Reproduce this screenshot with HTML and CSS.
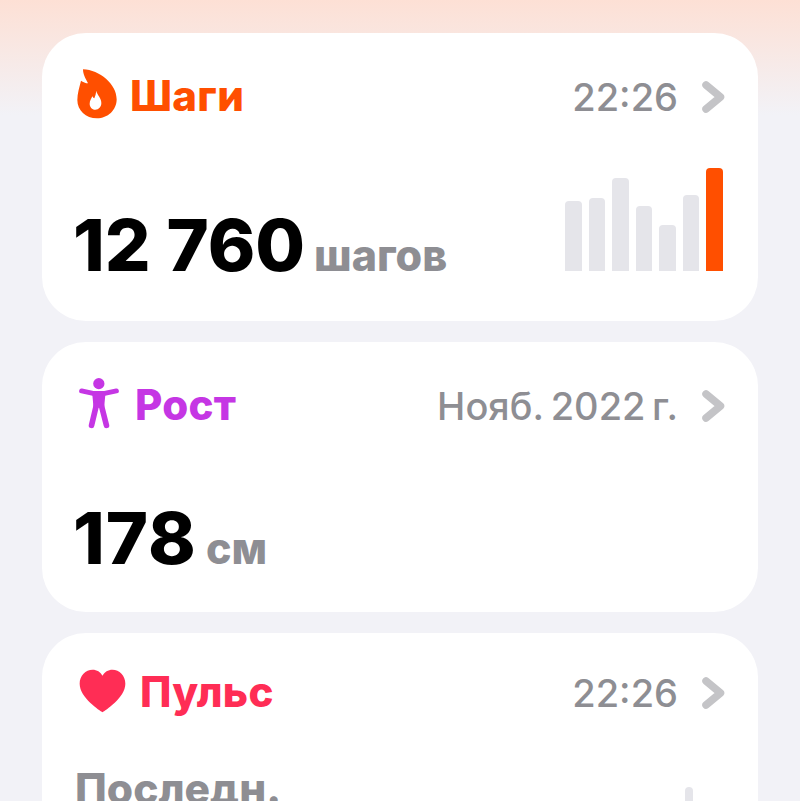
FILE: index.html
```html
<!DOCTYPE html>
<html lang="ru">
<head>
    <meta charset="UTF-8">
    <title>Здоровье</title>
    <link rel="stylesheet" href="styles.css">
</head>
<body>
    <div class="card card-steps">
        <div class="card-head">
            <svg class="icon icon-flame" viewBox="110 117 120 150">
                <path fill="#ff4f00" fill-rule="evenodd" d="M128 118C178 120 229 162 229 208C229 241 202 265 170 265C136 265 111 241 111 210C111 190 117 172 122 152C128 156 136 160 143 160C136 146 128 134 128 118ZM168 182C170 196 183 202 183 219C183 231 175 239 165 239C155 239 148 231 148 221C148 212 153 206 156 199C158 203 160 205 162 205C165 198 167 190 168 182Z"/>
            </svg>
            <span class="card-title title-steps">Шаги</span>
            <span class="card-time">22:26</span>
            <svg class="chevron" viewBox="0 0 24 34"><path d="M5 5L19.5 17L5 29"/></svg>
        </div>
        <div class="card-body">
            <div class="reading"><span class="value">12 760</span><span class="unit">шагов</span></div>
            <div class="bars">
                <div class="bar" style="height: 70px"></div>
                <div class="bar" style="height: 73px"></div>
                <div class="bar" style="height: 93px"></div>
                <div class="bar" style="height: 65px"></div>
                <div class="bar" style="height: 46px"></div>
                <div class="bar" style="height: 76px"></div>
                <div class="bar bar-now" style="height: 103px"></div>
            </div>
        </div>
    </div>

    <div class="card card-height">
        <div class="card-head">
            <svg class="icon icon-person" viewBox="55 35 125 160">
                <circle cx="117" cy="55" r="17" fill="#c536e4"/>
                <path fill="none" stroke="#c536e4" stroke-width="15" stroke-linecap="round" stroke-linejoin="round" d="M65 77L103 85H131L170 77"/>
                <path fill="#c536e4" d="M97 84H137L133 128H101Z"/>
                <path fill="none" stroke="#c536e4" stroke-width="17" stroke-linecap="round" d="M110 118L95 181M124 118L140 181"/>
            </svg>
            <span class="card-title title-height">Рост</span>
            <span class="card-time time-date">Нояб. 2022&#8201;г.</span>
            <svg class="chevron" viewBox="0 0 24 34"><path d="M5 5L19.5 17L5 29"/></svg>
        </div>
        <div class="card-body">
            <div class="reading"><span class="value">178</span><span class="unit">см</span></div>
        </div>
    </div>

    <div class="card card-pulse">
        <div class="card-head">
            <svg class="icon icon-heart" viewBox="56 60 142 132">
                <path fill="#ff2d55" d="M127 190C120 186 58 146 58 104C58 80 76 62 97 62C110 62 121 69 127 80C133 69 144 62 157 62C178 62 196 80 196 104C196 146 134 186 127 190Z"/>
            </svg>
            <span class="card-title title-pulse">Пульс</span>
            <span class="card-time">22:26</span>
            <svg class="chevron" viewBox="0 0 24 34"><path d="M5 5L19.5 17L5 29"/></svg>
        </div>
        <div class="card-body pulse-body">
            <div class="pulse-label">Последн.</div>
            <div class="bar pulse-bar"></div>
        </div>
    </div>
</body>
</html>
```

FILE: styles.css
```css
html, body {
    margin: 0;
    height: 801px;
    overflow: hidden;
}
body {
    font-family: Inter, "Liberation Sans", sans-serif;
    background: linear-gradient(#fde0d5 0, #f2f2f7 115px);
    padding: 33px 42px 0;
    box-sizing: border-box;
}
.card {
    background-color: #fff;
    border-radius: 44px;
    margin-bottom: 21px;
    padding: 0 34px;
    box-sizing: border-box;
}
.card-steps {
    height: 288px;
}
.card-height {
    height: 270px;
}
.card-pulse {
    height: 300px;
    margin-bottom: 0;
}
.card-head {
    display: flex;
    align-items: center;
    height: 128px;
}
.card-pulse .card-head {
    height: 120px;
}
.icon {
    flex: none;
}
.icon-flame {
    width: 40px;
    height: 50px;
    margin-left: 1px;
    margin-right: 13px;
    margin-bottom: 6px;
}
.icon-person {
    width: 42px;
    height: 53px;
    margin-left: 2px;
    margin-right: 15px;
    margin-bottom: 6px;
}
.icon-heart {
    width: 47px;
    height: 44px;
    margin-left: 3px;
    margin-right: 14px;
    margin-bottom: 4px;
}
.card-title {
    font-size: 42px;
    font-weight: 800;
    letter-spacing: 0.3px;
    margin-bottom: 4px;
}
.title-steps {
    color: #ff4f00;
}
.title-height {
    color: #c536e4;
}
.title-pulse {
    color: #ff2d55;
}
.card-time {
    margin-left: auto;
    font-size: 38px;
    font-weight: 500;
    color: #8e8e93;
}
.time-date {
    word-spacing: -3px;
}
.chevron {
    flex: none;
    width: 24px;
    height: 34px;
    margin-left: 23px;
    margin-right: -1px;
}
.chevron path {
    fill: none;
    stroke: #c4c4c7;
    stroke-width: 7.5;
    stroke-linecap: round;
    stroke-linejoin: round;
}
.card-body {
    display: flex;
    justify-content: space-between;
    align-items: flex-end;
    height: 110px;
}
.reading {
    margin-left: -3px;
}
.card-steps .reading {
    margin-bottom: -10px;
}
.card-height .reading {
    margin-bottom: 6px;
}
.card-height .value {
    letter-spacing: 1px;
}
.value {
    font-size: 72px;
    font-weight: 800;
    color: #000;
    line-height: 1;
}
.unit {
    margin-left: 9px;
    font-size: 43px;
    font-weight: 800;
    color: #8e8e93;
}
.bars {
    display: flex;
    align-items: flex-end;
    gap: 7px;
    margin-right: 1.5px;
}
.bar {
    width: 16.5px;
    border-radius: 4px 4px 0 0;
    background-color: #e5e5ea;
}
.bar-now {
    background-color: #ff4f00;
}
.pulse-body {
    align-items: flex-start;
}
.pulse-label {
    font-size: 42.5px;
    font-weight: 800;
    color: #8e8e93;
    margin-left: -1px;
    margin-top: 10px;
}
.pulse-bar {
    width: 8px;
    height: 60px;
    margin-top: 34px;
    margin-right: 31px;
}
```
